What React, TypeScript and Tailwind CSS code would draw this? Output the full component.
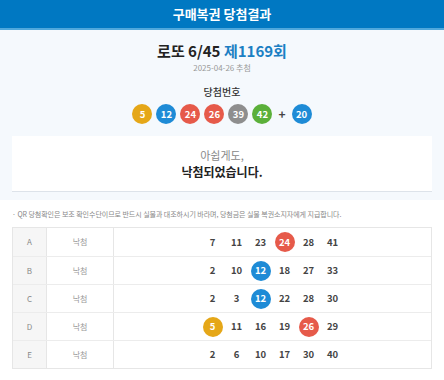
import React from 'react';

const ballColor = (n: number): string => {
    if (n <= 10) return 'bg-[#e5a718]';
    if (n <= 20) return 'bg-[#1e8bd6]';
    if (n <= 30) return 'bg-[#e65a4a]';
    if (n <= 40) return 'bg-[#8e8e8e]';
    return 'bg-[#5bb03a]';
};

const winning = [5, 12, 24, 26, 39, 42];
const bonus = 20;

const games: { label: string; nums: number[] }[] = [
    { label: 'A', nums: [7, 11, 23, 24, 28, 41] },
    { label: 'B', nums: [2, 10, 12, 18, 27, 33] },
    { label: 'C', nums: [2, 3, 12, 22, 28, 30] },
    { label: 'D', nums: [5, 11, 16, 19, 26, 29] },
    { label: 'E', nums: [2, 6, 10, 17, 30, 40] },
];

const Ball: React.FC<{ n: number }> = ({ n }) => (
    <span
        className={`flex h-[20px] w-[20px] items-center justify-center rounded-full text-[9.5px] font-semibold text-white ${ballColor(n)}`}
    >
        {n}
    </span>
);

const App: React.FC = () => {
    return (
        <div className="min-h-[380px] w-[444px] bg-white font-['Noto_Sans_CJK_KR','Noto_Sans',sans-serif] text-[#333]">
            {/* Header */}
            <header className="flex h-[28px] items-center justify-center bg-[#0078c2] text-[13px] font-semibold text-white">
                구매복권 당첨결과
            </header>
            <div className="h-[2px] bg-[#4fa8dc]" />

            {/* Draw info */}
            <section className="bg-[#f5f9fd] px-3 pt-[11px] pb-[8px]">
                <h1 className="text-center text-[15px] leading-[20px] font-bold text-[#222]">
                    로또 6/45 <span className="text-[#1b7fc3]">제1169회</span>
                </h1>
                <p className="mt-[1px] text-center text-[8px] leading-[12px] text-[#999]">
                    2025-04-26 추첨
                </p>
                <p className="mt-[11px] text-center text-[10px] leading-[14px] font-medium text-[#333]">
                    당첨번호
                </p>
                <div className="mt-[5px] flex items-center justify-center gap-[4px]">
                    {winning.map((n) => (
                        <Ball key={n} n={n} />
                    ))}
                    <span className="mx-[2px] text-[12px] font-bold text-[#444]">+</span>
                    <Ball n={bonus} />
                </div>

                <div className="mt-[12px] flex h-[56px] flex-col items-center justify-center border-b border-[#dde3ea] bg-white">
                    <p className="text-[11px] leading-[16px] text-[#888]">아쉽게도,</p>
                    <p className="text-[12px] leading-[17px] font-bold text-[#222]">
                        낙첨되었습니다.
                    </p>
                </div>
            </section>

            {/* Notice */}
            <p className="mt-[9px] px-3 text-[7px] leading-[10px] tracking-[-0.05px] text-[#888]">
                · QR 당첨확인은 보조 확인수단이므로 반드시 실물과 대조하시기 바라며, 당첨금은 실물 복권소지자에게 지급합니다.
            </p>

            {/* Games table */}
            <div className="mx-3 mt-[8px] border border-[#e6e6e6]">
                {games.map((g, i) => (
                    <div
                        key={g.label}
                        className={`flex h-[28px] ${i > 0 ? 'border-t border-[#ececec]' : ''}`}
                    >
                        <div className="flex w-[34px] items-center justify-center border-r border-[#e6e6e6] bg-[#f6f6f6] text-[8px] text-[#888]">
                            {g.label}
                        </div>
                        <div className="flex w-[67px] items-center justify-center border-r border-[#e6e6e6] text-[8px] text-[#999]">
                            낙첨
                        </div>
                        <div className="flex flex-1 items-center justify-center gap-[4px]">
                            {g.nums.map((n) =>
                                winning.includes(n) ? (
                                    <Ball key={n} n={n} />
                                ) : (
                                    <span
                                        key={n}
                                        className="flex h-[20px] w-[20px] items-center justify-center text-[9.5px] font-semibold text-[#444]"
                                    >
                                        {n}
                                    </span>
                                ),
                            )}
                        </div>
                    </div>
                ))}
            </div>
        </div>
    );
};

export default App;
